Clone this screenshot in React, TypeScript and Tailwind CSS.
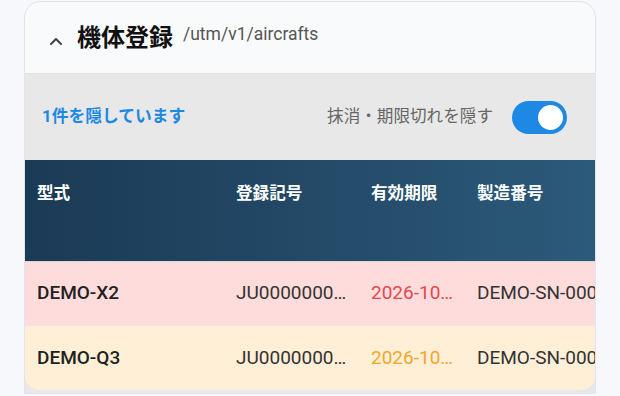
import React from "react";

const font = { fontFamily: 'Roboto, "Noto Sans CJK JP", sans-serif' };

function Row({ bg, model, reg, date, dateColor, sn, border }: { bg: string; model: string; reg: string; date: string; dateColor: string; sn: string; border: string }) {
  return (
    <div className={`grid grid-cols-[199px_135px_106px_130px] h-[64px] items-center text-[19px] ${bg} ${border}`}>
      <div className="pl-[12px] pr-3 truncate font-medium text-[#222]">{model}</div>
      <div className="pl-[12px] pr-[12px] truncate text-[#333]">{reg}</div>
      <div className={`pl-[12px] pr-[11px] truncate ${dateColor}`}>{date}</div>
      <div className="pl-[12px] whitespace-nowrap overflow-hidden text-[#333]">{sn}</div>
    </div>
  );
}

export default function App() {
  return (
    <div className="min-h-screen bg-[#f6f8fb] pl-[24px] pt-[1px]" style={font}>
      <div className="w-[572px] rounded-t-[16px] border border-[#e1e4ea] bg-[#f9fafc] overflow-hidden">
        <div className="h-[71px] flex items-center pl-[24px]">
          <svg width="14" height="10" viewBox="0 0 14 10" className="mr-[14px] mt-[6px]">
            <path d="M2 8 L7 3 L12 8" fill="none" stroke="#444" strokeWidth="2" strokeLinecap="round" strokeLinejoin="round" />
          </svg>
          <span className="text-[24px] font-bold text-[#111] leading-none">機体登録</span>
          <span className="ml-[10px] text-[17.5px] text-[#555] leading-none pb-[6px]">/utm/v1/aircrafts</span>
        </div>
        <div className="bg-[#e8e8e8] border-t border-[#e0e0e0] pb-[3px]">
          <div className="h-[86px] flex items-center justify-between pl-[17px] pr-[28px]">
            <span className="text-[16.8px] font-bold text-[#1e88e5]">1件を隠しています</span>
            <div className="flex items-center gap-[19px]">
              <span className="text-[16.6px] text-[#666]">抹消・期限切れを隠す</span>
              <div className="w-[55px] h-[33px] rounded-full bg-[#1e88e5] flex items-center justify-end pr-[4px]">
                <div className="w-[25px] h-[25px] rounded-full bg-white" />
              </div>
            </div>
          </div>
          <div className="rounded-b-[14px] overflow-hidden">
            <div className="grid grid-cols-[199px_135px_106px_130px] h-[102px] items-start pt-[22px] text-[16.6px] font-bold text-white bg-gradient-to-r from-[#1b3a55] to-[#2c5a7a] border-b border-[#d8d8d8]">
              <div className="pl-[12px]">型式</div>
              <div className="pl-[12px]">登録記号</div>
              <div className="pl-[12px]">有効期限</div>
              <div className="pl-[12px]">製造番号</div>
            </div>
            <Row bg="bg-[#ffdcdc]" border="border-b border-[#f0e4e4]" model="DEMO-X2" reg="JU0000000001" date="2026-10-31" dateColor="text-[#e5474e]" sn="DEMO-SN-0002" />
            <Row bg="bg-[#ffefd6]" border="" model="DEMO-Q3" reg="JU0000000002" date="2026-10-31" dateColor="text-[#f2a62a]" sn="DEMO-SN-0003" />
          </div>
        </div>
      </div>
    </div>
  );
}
